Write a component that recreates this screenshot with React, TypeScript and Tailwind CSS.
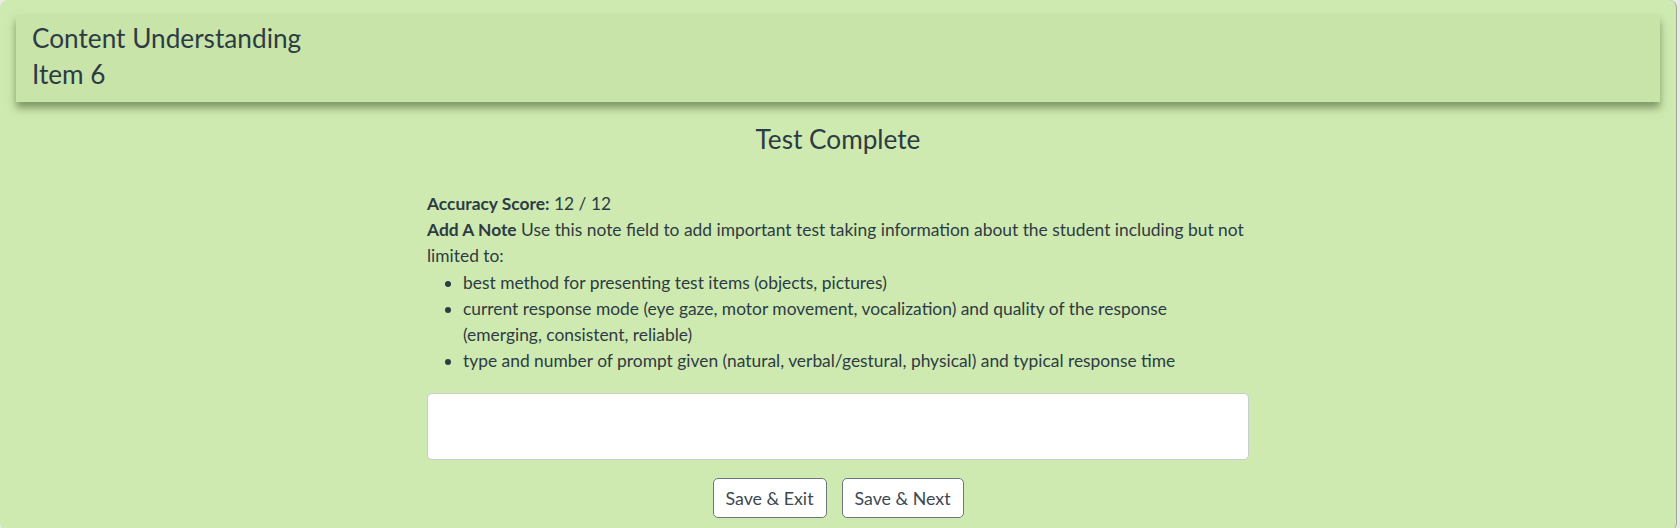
import React from "react";

const notes = [
  "best method for presenting test items (objects, pictures)",
  "current response mode (eye gaze, motor movement, vocalization) and quality of the response (emerging, consistent, reliable)",
  "type and number of prompt given (natural, verbal/gestural, physical) and typical response time",
];

export default function App() {
  return (
    <div
      className="h-[528px] w-full overflow-hidden bg-[#e9ece6] text-[#2d3b45]"
      style={{ fontFamily: "Lato, 'Open Sans', sans-serif" }}
    >
      <div className="mr-[3px] h-[531px] rounded-lg border-r border-[#9aa898] bg-[#cfeab0] pt-[15px]">
        {/* item header */}
        <header className="mx-[16px] flex h-[87px] flex-col bg-[#c8e4a8] px-4 pt-[5px] text-[26.2px] leading-[36px] shadow-[0_6px_8px_rgba(60,80,40,0.55)]">
          <div>Content Understanding</div>
          <div>Item 6</div>
        </header>

        <h1 className="mt-[19px] text-center text-[26.2px] leading-[36px]">Test Complete</h1>

        <section className="mx-auto mt-[34px] w-[822px] text-[17.4px] leading-[26.2px]">
          <p>
            <span className="font-bold">Accuracy Score:</span> 12 / 12
          </p>
          <p className="-mr-[10px]">
            <span className="font-bold">Add A Note</span> Use this note field to add important test taking
            information about the student including but not limited to:
          </p>
          <ul className="list-disc pl-[36px] pr-[40px]">
            {notes.map((n) => (
              <li key={n}>{n}</li>
            ))}
          </ul>

          <textarea
            aria-label="Note"
            className="mt-[19px] block h-[67px] w-full resize-none rounded-[5px] border border-[#c7cdd1] bg-white"
          />

          <div className="mt-[18px] flex justify-center gap-[15px]">
            <button className="h-[40px] w-[114px] rounded-[5px] border border-[#6b7780] bg-white text-[17.8px] text-[#3d4851]">
              Save &amp; Exit
            </button>
            <button className="h-[40px] w-[122px] rounded-[5px] border border-[#6b7780] bg-white text-[17.8px] text-[#3d4851]">
              Save &amp; Next
            </button>
          </div>
        </section>
      </div>
    </div>
  );
}
